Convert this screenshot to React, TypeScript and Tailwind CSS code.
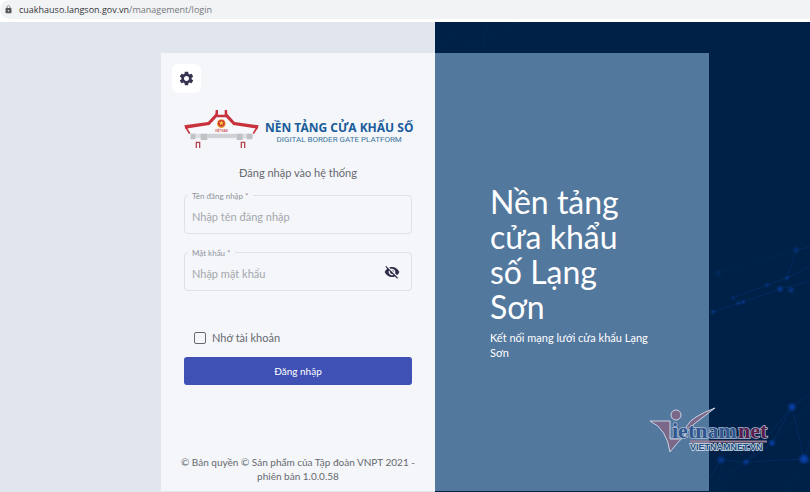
import { useState } from "react";
import { MdLock, MdSettings, MdVisibility, MdVisibilityOff } from "react-icons/md";

const nodes = [
  { x: 796, y: 250, r: 4, o: 0.35 },
  { x: 787, y: 278, r: 3, o: 0.5 },
  { x: 767, y: 285, r: 3, o: 0.4 },
  { x: 780, y: 289, r: 4, o: 0.6 },
  { x: 791, y: 290, r: 4, o: 0.5 },
  { x: 743, y: 302, r: 3, o: 0.5 },
  { x: 738, y: 303, r: 3, o: 0.4 },
  { x: 733, y: 298, r: 3, o: 0.3 },
  { x: 713, y: 312, r: 3, o: 0.5 },
  { x: 718, y: 273, r: 4, o: 0.2 },
  { x: 792, y: 407, r: 5, o: 0.9 },
  { x: 772, y: 443, r: 4, o: 0.8 },
  { x: 804, y: 459, r: 6, o: 1 },
  { x: 746, y: 462, r: 4, o: 0.6 },
  { x: 721, y: 460, r: 5, o: 0.6 },
];

function NetworkBackground() {
  return (
    <svg
      className="absolute inset-0 h-full w-full"
      viewBox="435 22 375 470"
      preserveAspectRatio="xMaxYMax slice"
      aria-hidden="true"
    >
      <defs>
        <radialGradient id="node">
          <stop offset="0" stopColor="#0a48bd" />
          <stop offset="0.5" stopColor="#083c9f" stopOpacity="0.8" />
          <stop offset="1" stopColor="#083c9f" stopOpacity="0" />
        </radialGradient>
      </defs>
      <g stroke="#0b3f94" fill="none">
        <path
          strokeOpacity="0.3"
          d="M713 312 743 302 780 289 810 281M733 298 767 285 787 278 810 266M787 278 796 250 810 247M792 407 810 394M792 407 772 443M792 407 804 459M746 462 804 459 810 462M746 462 792 407M721 460 746 462M721 460 710 478M772 443 746 462M804 459 810 442"
        />
        <path
          strokeOpacity="0.12"
          d="M438 50 462 22M455 52 520 22M482 53 487 22M490 53 516 22M718 273 796 250M804 459 784 492M721 460 727 492M746 462 712 490M772 443 810 405M745 462 700 492"
        />
      </g>
      {nodes.map((n) => (
        <circle key={`${n.x}-${n.y}`} cx={n.x} cy={n.y} r={n.r} fill="url(#node)" opacity={n.o} />
      ))}
    </svg>
  );
}

function GateLogo() {
  return (
    <svg className="h-10 w-[75px] shrink-0" viewBox="12 15 225 120" aria-hidden="true">
      <path d="M18 71 86 61 108 35H140L162 61 232 71 221 88H29Z" fill="#f7f8fb" />
      <path d="M32 89H218V103H32Z" fill="#dcdee2" />
      <path d="M32 89H46V106H32ZM62 89H82V108H62ZM170 89H188V108H170ZM200 89H217V106H200Z" fill="#bfc1c5" />
      <path d="M82 90H170V101H82Z" fill="#cfd1d5" />
      <path d="M29 89 17 69M220 89 232 69" fill="none" stroke="#c8323d" strokeWidth="5" />
      <path
        d="M13 64 84 54 106 30 107 18H114V32H134V18H141L142 30 164 54 236 64 233 74 160 63 138 40H110L88 63 16 74Z"
        fill="#c8323d"
      />
      <path d="M49 132V115H59V132M184 132V115H194V132" fill="none" stroke="#b9474f" strokeWidth="4" />
      <circle cx="124" cy="59" r="13" fill="#e2a03c" />
      <circle cx="124" cy="58" r="10" fill="#d3302b" />
      <path d="m124 49 2 6h6l-5 4 2 6-5-4-5 4 2-6-5-4h6Z" fill="#f6cf45" />
      <text x="124" y="83" textAnchor="middle" fontSize="8" fontWeight="700" fill="#cf4a50" fontFamily="Liberation Sans, sans-serif">
        VIỆT NAM
      </text>
    </svg>
  );
}

function Watermark() {
  return (
    <svg
      className="absolute right-10 bottom-9 h-[50px] w-[122px]"
      viewBox="648 406 122 50"
      role="img"
      aria-label="Vietnamnet"
    >
      <g fill="#7b6788" stroke="#c9d3e2">
        <path d="M650 421H670V439H681L686 434Q676 444 670 452 667 429 650 421Z" />
        <path d="M715 408 694 424Q688 428 684 438 684 424 696 417 704 412 715 408Z" />
        <circle cx="676" cy="415" r="5" />
      </g>
      <g fontFamily="Liberation Serif, serif" fontWeight="700" fontSize="22" stroke="#aebbd0" strokeWidth="1.500" paintOrder="stroke">
        <text x="672" y="438" fill="#2f568f">
          ietnam
        </text>
        <text x="738" y="438" fill="#5a1c4c">
          net
        </text>
      </g>
      <path d="M690 441.500H767" stroke="#9b7d92" strokeWidth="2" />
      <text
        x="690"
        y="450"
        fontFamily="Liberation Sans, sans-serif"
        fontWeight="700"
        fontSize="9"
        fill="#24517f"
        stroke="#d3dbe7"
        strokeWidth="1.500"
        paintOrder="stroke"
      >
        VIETNAMNET.VN
      </text>
    </svg>
  );
}

function AddressBar() {
  return (
    <header className="bg-white pb-[3px] font-['Open_Sans','Noto_Sans',sans-serif]">
      <div className="flex h-[19px] items-center gap-1.5 rounded-l-full bg-[#f1f3f4] pl-1 text-[9px] text-[#75787c]">
        <MdLock className="size-[9px] text-[#55585c]" />
        <p>
          <span className="text-[#33363a]">cuakhauso.langson.gov.vn</span>/management/login
        </p>
      </div>
    </header>
  );
}

function LoginForm() {
  const [showPassword, setShowPassword] = useState(false);

  return (
    <form className="flex flex-col" onSubmit={(e) => e.preventDefault()}>
      <div className="relative">
        <label htmlFor="username" className="absolute -top-1 left-1 bg-[#f4f6fa] px-1 text-[8px] leading-[10px] text-[#909399]">
          Tên đăng nhập *
        </label>
        <input
          id="username"
          type="text"
          placeholder="Nhập tên đăng nhập"
          className="h-[39px] w-full rounded-[4px] border border-[#dfe1e6] px-[7px] pt-1 text-[11px] outline-none placeholder:text-[#a4a7ac]"
        />
      </div>
      <div className="relative mt-[18px]">
        <label htmlFor="password" className="absolute -top-1 left-1 bg-[#f4f6fa] px-1 text-[8px] leading-[10px] text-[#909399]">
          Mật khẩu *
        </label>
        <input
          id="password"
          type={showPassword ? "text" : "password"}
          placeholder="Nhập mật khẩu"
          className="h-[39px] w-full rounded-[4px] border border-[#dfe1e6] pr-9 pl-[7px] pt-1 text-[11px] outline-none placeholder:text-[#a4a7ac]"
        />
        <button
          type="button"
          onClick={() => setShowPassword(!showPassword)}
          className="absolute inset-y-0 right-3 text-[#2f2e4a]"
          aria-label="Hiện mật khẩu"
        >
          {showPassword ? <MdVisibility className="size-4" /> : <MdVisibilityOff className="size-4" />}
        </button>
      </div>
      <label className="mt-[39px] ml-2.5 flex items-center gap-1.5 text-[11px] leading-4 text-[#66696e]">
        <input type="checkbox" className="size-3 appearance-none rounded-[2px] border border-[#66686d] checked:bg-[#3f51b5]" />
        Nhớ tài khoản
      </label>
      <button type="submit" className="mt-[11px] h-7 rounded-[3px] bg-[#3f51b5] text-[10px] text-white">
        Đăng nhập
      </button>
    </form>
  );
}

export default function App() {
  return (
    <div className="flex min-h-screen flex-col font-[Lato,'Noto_Sans',sans-serif]">
      <AddressBar />
      <main className="relative grid flex-1 grid-cols-[435fr_375fr]">
        <section className="flex justify-end bg-[#e0e5ee] pt-[31px] pb-px">
          <div className="flex w-[63%] flex-col bg-[#f4f6fa] px-[23px] pt-[11px] pb-2">
            <button
              className="-ml-3 flex size-[29px] items-center justify-center rounded-md bg-white text-[#35334f]"
              aria-label="Cài đặt"
            >
              <MdSettings className="size-[17px]" />
            </button>
            <div className="mt-4 flex items-center gap-1.5 whitespace-nowrap">
              <GateLogo />
              <div className="flex flex-col items-center pt-1.5">
                <strong className="font-['Noto_Sans',sans-serif] text-[12px] leading-[15px] font-bold text-[#1a5c9c]">
                  NỀN TẢNG CỬA KHẨU SỐ
                </strong>
                <span className="font-[Roboto,sans-serif] text-[8px] leading-[9px] text-[#3b759f]">
                  DIGITAL BORDER GATE PLATFORM
                </span>
              </div>
            </div>
            <h2 className="mt-4 mb-[14px] text-center text-[11px] leading-4 text-[#66696e]">Đăng nhập vào hệ thống</h2>
            <LoginForm />
            <footer className="-mx-1 mt-auto pt-4 text-center text-[10px] leading-[14px] text-[#66696e]">
              © Bản quyền © Sản phẩm của Tập đoàn VNPT 2021 - phiên bản 1.0.0.58
            </footer>
          </div>
        </section>
        <section className="relative flex bg-[#002147] pt-[31px] pb-px">
          <NetworkBackground />
          <div className="relative flex w-[73%] flex-col justify-center bg-[#53789e] px-[55px] text-white">
            <h1 className="pr-4 text-[32px] leading-[35px]">Nền tảng cửa khẩu số Lạng Sơn</h1>
            <p className="mt-1.5 text-[11px] leading-[15px]">Kết nối mạng lưới cửa khẩu Lạng Sơn</p>
          </div>
        </section>
        <Watermark />
      </main>
    </div>
  );
}
